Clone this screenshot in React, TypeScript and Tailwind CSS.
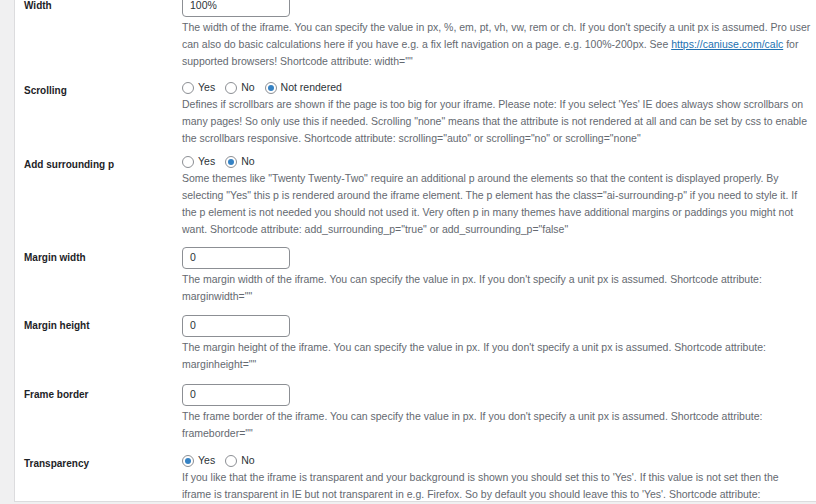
import React from "react";

type Field =
  | { kind: "input"; label: string; value: string; desc: React.ReactNode }
  | { kind: "radio"; label: string; options: string[]; checked: number; desc: React.ReactNode };

const Radio = ({ on }: { on: boolean }) => (
  <span className="mr-[4px] inline-flex h-[12px] w-[12px] shrink-0 items-center justify-center rounded-full border border-[#8c8f94] bg-white">
    {on && <span className="h-[6px] w-[6px] rounded-full bg-[#3582c4]" />}
  </span>
);

const fields: (Field & { gap: string })[] = [
  {
    kind: "input",
    label: "Width",
    value: "100%",
    gap: "mt-[-5px]",
    desc: (
      <>
        The width of the iframe. You can specify the value in px, %, em, pt, vh, vw, rem or ch. If you
        don't specify a unit px is assumed. Pro user can also do basic calculations here if you have e.g.
        a fix left navigation on a page. e.g. 100%-200px. See{" "}
        <a className="text-[#2271b1] underline">https://caniuse.com/calc</a> for supported browsers!
        Shortcode attribute: width=""
      </>
    ),
  },
  {
    kind: "radio",
    label: "Scrolling",
    options: ["Yes", "No", "Not rendered"],
    checked: 2,
    gap: "mt-[9px]",
    desc: (
      <>
        Defines if scrollbars are shown if the page is too big for your iframe. Please note: If you select
        'Yes' IE does always show scrollbars on many pages! So only use this if needed. Scrolling "none"
        means that the attribute is not rendered at all and can be set by css to enable the scrollbars
        responsive. Shortcode attribute: scrolling="auto" or scrolling="no" or scrolling="none"
      </>
    ),
  },
  {
    kind: "radio",
    label: "Add surrounding p",
    options: ["Yes", "No"],
    checked: 1,
    gap: "mt-[6px]",
    desc: (
      <>
        Some themes like "Twenty Twenty-Two" require an additional p around the elements so that the
        content is displayed properly. By selecting "Yes" this p is rendered around the iframe element. The
        p element has the class="ai-surrounding-p" if you need to style it. If
        <br />
        the p element is not needed you should not used it. Very often p in many themes have additional
        margins or paddings you might not
        <br />
        want. Shortcode attribute: add_surrounding_p="true" or add_surrounding_p="false"
      </>
    ),
  },
  {
    kind: "input",
    label: "Margin width",
    value: "0",
    gap: "mt-[9px]",
    desc: (
      <>
        The margin width of the iframe. You can specify the value in px. If you don't specify a unit px is
        assumed. Shortcode attribute: marginwidth=""
      </>
    ),
  },
  {
    kind: "input",
    label: "Margin height",
    value: "0",
    gap: "mt-[10px]",
    desc: (
      <>
        The margin height of the iframe. You can specify the value in px. If you don't specify a unit px is
        assumed. Shortcode attribute: marginheight=""
      </>
    ),
  },
  {
    kind: "input",
    label: "Frame border",
    value: "0",
    gap: "mt-[11px]",
    desc: (
      <>
        The frame border of the iframe. You can specify the value in px. If you don't specify a unit px is
        assumed. Shortcode attribute: frameborder=""
      </>
    ),
  },
  {
    kind: "radio",
    label: "Transparency",
    options: ["Yes", "No"],
    checked: 0,
    gap: "mt-[10px]",
    desc: (
      <>
        If you like that the iframe is transparent and your background is shown you should set this to
        'Yes'. If this value is not set then the
        <br />
        iframe is transparent in IE but not transparent in e.g. Firefox. So by default you should leave this
        to 'Yes'. Shortcode attribute: transparency="true" or transparency="false"
      </>
    ),
  },
];

export default function App() {
  return (
    <div className="h-[504px] w-[816px] overflow-hidden bg-[#f0f0f1] font-['Liberation_Sans',Arial,sans-serif] text-[10.5px]">
      <div className="ml-[14px] h-[502px] overflow-hidden border-b border-l border-[#dcdcde] bg-white">
        {fields.map((f) => (
          <div key={f.label} className={`flex ${f.gap}`}>
            <div
              className={`w-[167px] shrink-0 pl-[9px] text-[10px] font-bold leading-[17px] text-[#1d2327] ${
                f.kind === "input" ? "pt-[2px]" : "pt-[3px]"
              }`}
            >
              {f.label}
            </div>
            <div className="min-w-0 flex-1">
              {f.kind === "input" ? (
                <div className="flex h-[22px] w-[108px] items-center rounded-[4px] border border-[#8c8f94] bg-white px-[7px] text-[10.5px] text-[#2c3338]">
                  {f.value}
                </div>
              ) : (
                <div className="flex h-[17px] items-center gap-[10px] text-[10.5px] text-[#2c3338]">
                  {f.options.map((o, i) => (
                    <span key={o} className="flex items-center">
                      <Radio on={i === f.checked} />
                      {o}
                    </span>
                  ))}
                </div>
              )}
              <p
                className={`text-[10.5px] leading-[17px] text-[#646970] ${
                  f.kind === "input" ? "mt-[2px]" : ""
                }`}
              >
                {f.desc}
              </p>
            </div>
          </div>
        ))}
      </div>
    </div>
  );
}
